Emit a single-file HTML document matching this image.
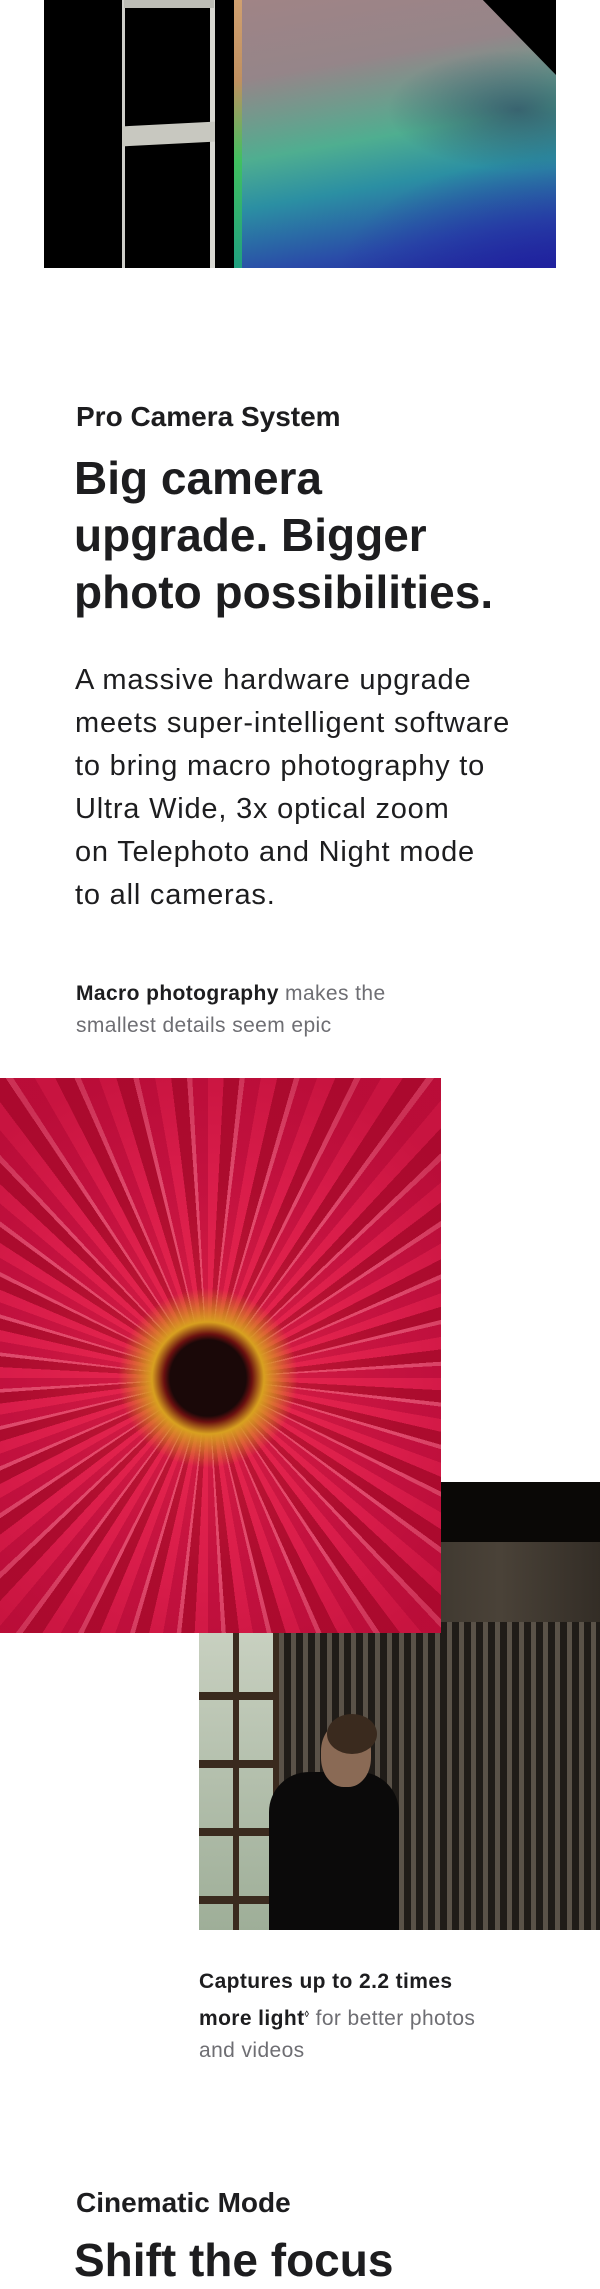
<!DOCTYPE html>
<html><head><meta charset="utf-8"><style>
*{margin:0;padding:0;box-sizing:border-box}
body{width:600px;height:2253px;background:#fff;position:relative;overflow:hidden;font-family:"Liberation Sans",sans-serif;color:#1d1d1f}
.abs{position:absolute}
.eyebrow{font-size:28px;font-weight:bold;letter-spacing:0px;white-space:nowrap}
.head{font-size:46px;font-weight:bold;line-height:57px;letter-spacing:0px;white-space:nowrap}
.body{font-size:29px;line-height:43px;white-space:nowrap;letter-spacing:0.8px}
.cap{font-size:21px;line-height:32px;white-space:nowrap;color:#6e6e73;letter-spacing:0.4px}
.cap b{color:#1d1d1f}
</style></head><body>

<!-- top image -->
<div class="abs" style="left:44px;top:0;width:512px;height:268px;background:#000;overflow:hidden">
  <div class="abs" style="left:78px;top:0;width:3px;height:268px;background:#cfcfca"></div>
  <div class="abs" style="left:166px;top:0;width:5px;height:268px;background:#d8d8d2"></div>
  <div class="abs" style="left:78px;top:124px;width:93px;height:20px;background:#c8c8c0;transform:skewY(-3deg)"></div>
  <div class="abs" style="left:80px;top:0;width:90px;height:8px;background:#bdbdb6"></div>
  <div class="abs" style="left:194px;top:0;width:318px;height:268px;clip-path:polygon(0 0,77% 0,100% 28%,100% 100%,0 100%);background:
    radial-gradient(ellipse 130px 60px at 280px 110px,rgba(40,50,90,.6),transparent),
    radial-gradient(ellipse 200px 120px at 300px 280px,rgba(30,30,160,.7),transparent),
    linear-gradient(170deg,#a08486 0%,#958589 25%,#4fae90 50%,#2b8fa3 65%,#2a4ca8 85%,#22259a 100%)"></div>
  <div class="abs" style="left:190px;top:0;width:8px;height:268px;background:linear-gradient(#d0a070,#c09060 30%,#40c060 60%,#20a080)"></div>
</div>

<div class="abs eyebrow" style="left:76px;top:401px">Pro Camera System</div>
<div class="abs head" style="left:74px;top:450px">Big camera<br>upgrade. Bigger<br>photo possibilities.</div>
<div class="abs body" style="left:75px;top:659px">A massive hardware upgrade<br>meets super-intelligent software<br>to bring macro photography to<br>Ultra Wide, 3x optical zoom<br>on Telephoto and Night mode<br>to all cameras.</div>
<div class="abs cap" style="left:76px;top:978px"><b>Macro photography</b> makes the<br>smallest details seem epic</div>

<!-- dark photo -->
<div class="abs" style="left:199px;top:1482px;width:401px;height:448px;overflow:hidden;background:linear-gradient(90deg,#2b2620 0%,#3a342c 50%,#4a4238 75%,#332d26 100%)">
  <div class="abs" style="left:0;top:0;width:401px;height:60px;background:#0a0806"></div>
  <div class="abs" style="left:0;top:150px;width:80px;height:300px;background:linear-gradient(#c8d0c0,#9eae98);"></div>
  <div class="abs" style="left:0;top:150px;width:80px;height:300px;background:repeating-linear-gradient(90deg,transparent 0 34px,#3a2a1e 34px 40px),repeating-linear-gradient(transparent 0 60px,#3a2a1e 60px 68px)"></div>
  <div class="abs" style="left:80px;top:140px;width:321px;height:308px;background:repeating-linear-gradient(90deg,#5a5248 0 5px,#201c18 5px 12px)"></div>
  <div class="abs" style="left:70px;top:290px;width:130px;height:160px;background:#0b0a0a;border-radius:40px 40px 0 0"></div>
  <div class="abs" style="left:122px;top:240px;width:50px;height:65px;background:#8a6a55;border-radius:45%"></div>
  <div class="abs" style="left:128px;top:232px;width:50px;height:40px;background:#3a2a1e;border-radius:50%"></div>
</div>

<!-- flower -->
<div class="abs" style="left:0;top:1078px;width:441px;height:555px;overflow:hidden;background:#c8103a">
  <div class="abs" style="left:-350px;top:-350px;width:1116px;height:1300px;background:repeating-conic-gradient(from 0deg at 558px 650px,#e02050 0deg 3deg,#a00828 3deg 6deg,#e86080 6deg 7deg,#c01040 7deg 10deg)"></div>
  <div class="abs" style="left:0;top:0;width:441px;height:555px;background:radial-gradient(circle at 208px 300px,#1a0808 0 38px,#6a1010 44px,#d8a020 56px,rgba(230,40,70,.4) 90px,rgba(200,20,60,.3) 200px,rgba(180,10,50,.55) 320px)"></div>
</div>

<div class="abs cap" style="left:199px;top:1966px"><b>Captures up to 2.2 times<br>more light<sup style="font-size:9px">◊</sup></b> for better photos<br>and videos</div>

<div class="abs eyebrow" style="left:76px;top:2187px">Cinematic Mode</div>
<div class="abs head" style="left:74px;top:2232px">Shift the focus</div>
</body></html>
